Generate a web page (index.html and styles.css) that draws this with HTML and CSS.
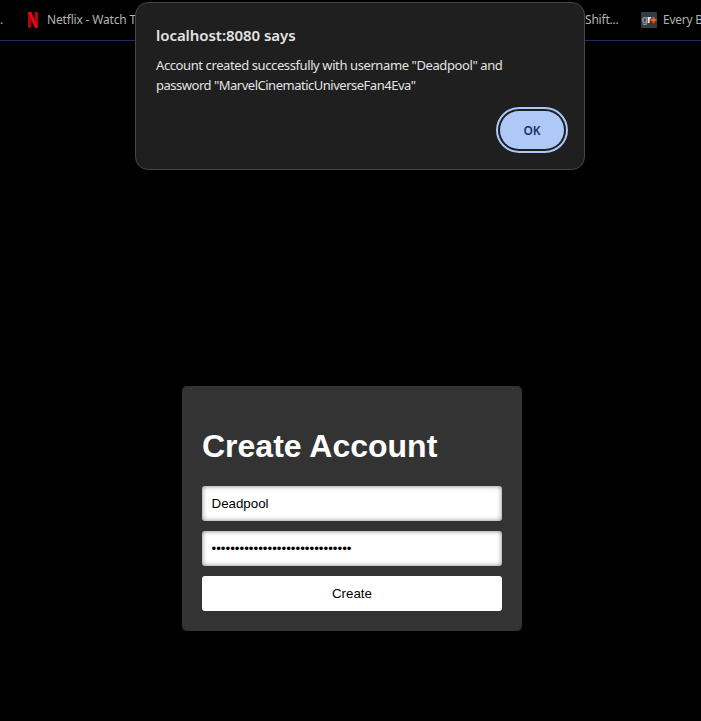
FILE: index.html
```html
<!DOCTYPE html>
<html lang="en">
<head>
<meta charset="utf-8">
<title>Create Account</title>
<link rel="stylesheet" href="styles.css">
</head>
<body>
<nav class="bookmarks">
  <span class="dots">.</span>
  <span class="bookmark netflix">
    <svg class="netflix-icon" width="10" height="16" viewBox="0 0 10 16"><path fill="#b1060f" d="M0 0h3.300v15.600L0 16zM6.700 0H10v16l-3.300-.4z"/><path fill="#e50914" d="M0 0h3.300L10 16l-3.300-.4z"/></svg>
    <span class="label">Netflix - Watch T</span>
  </span>
  <span class="bookmark shift"><span class="label">Shift...</span></span>
  <span class="bookmark games">
    <svg width="16" height="16" viewBox="0 0 16 16"><rect width="16" height="16" rx="1" fill="#343b43"/><text class="gr" x="0.700" y="10.500"><tspan fill="#92969a">g</tspan><tspan fill="#fff">r</tspan></text><path fill="#ff5a0a" d="M11.500 5h2v2h2v2h-2v2h-2V9h-2V7h2z"/></svg>
    <span class="label">Every B</span>
  </span>
</nav>
<main class="page">
  <form class="card">
    <h1>Create Account</h1>
    <input type="text" value="Deadpool" aria-label="Username">
    <input type="password" value="MarvelCinematicUniverseFan4Eva" aria-label="Password">
    <button type="button">Create</button>
  </form>
</main>
<section class="dialog" role="alertdialog">
  <h2>localhost:8080 says</h2>
  <p><span class="line first">Account created successfully with username "Deadpool" and</span><span class="line second">password "MarvelCinematicUniverseFan4Eva"</span></p>
  <button class="ok" type="button">OK</button>
</section>
</body>
</html>
```
FILE: styles.css
```css
* { box-sizing: border-box; }
body {
  margin: 0;
  height: 721px;
  background: #000;
  overflow: hidden;
  font-family: "Liberation Sans", Arial, sans-serif;
}
.bookmarks {
  display: flex;
  align-items: center;
  height: 41px;
  border-bottom: 1px solid #202b5a;
  color: #b4b4b4;
  font: 12px/16px "Noto Sans", sans-serif;
  white-space: nowrap;
}
.dots { width: 28px; flex: none; }
.bookmark { display: flex; align-items: center; flex: none; }
.netflix { width: 557px; gap: 9px; }
.netflix .label { letter-spacing: -0.18px; }
.shift { width: 56px; }
.shift .label { letter-spacing: -0.2px; }
.games { gap: 6px; }
.games .label { letter-spacing: -0.25px; }
.gr { font: bold 10px "Liberation Sans", sans-serif; letter-spacing: -0.5px; }
.page { display: flex; justify-content: center; padding: 345px 0 0 3px; }
.card {
  display: flex;
  flex-direction: column;
  gap: 10px;
  width: 340px;
  height: 245px;
  padding: 20px;
  border-radius: 5px;
  background: #333;
}
.card h1 { margin: 22px 0 11px; color: #fff; font-size: 32px; line-height: 37px; }
.card input, .card button {
  flex: none;
  width: 100%;
  height: 35px;
  margin: 0;
  padding: 10px;
  border: 0;
  border-radius: 3px;
  background: #fff;
  color: #000;
  font: 13.333px "Liberation Sans", Arial, sans-serif;
}
.card input { padding-left: 9.5px; box-shadow: inset 0 0 5px rgba(0, 0, 0, 0.5); }
.dialog {
  position: absolute;
  top: 2px;
  left: 135px;
  display: flex;
  flex-direction: column;
  width: 450px;
  height: 168px;
  padding: 21px 19px 0 20px;
  border: 1px solid #454545;
  border-radius: 13px;
  background: #1f1f1f;
  color: #e3e3e3;
  font-family: "Noto Sans", sans-serif;
}
.dialog h2 { margin: 0; font-size: 15px; line-height: 22px; font-weight: 600; letter-spacing: -0.05px; }
.dialog p { margin: 9px 0 0; font-size: 13px; line-height: 20px; white-space: nowrap; }
.line { display: block; }
.first { letter-spacing: -0.4px; }
.second { letter-spacing: -0.49px; }
.ok {
  align-self: flex-end;
  width: 64px;
  height: 38px;
  margin: 16px 1px 0 0;
  padding: 0;
  border: 0;
  border-radius: 19px;
  outline: 2px solid #a8c7fa;
  outline-offset: 2px;
  background: #afc9f7;
  color: #173467;
  font: 600 12px "Noto Sans", sans-serif;
}
```
